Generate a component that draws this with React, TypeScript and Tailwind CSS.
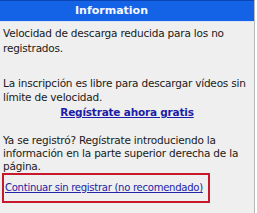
export default function App() {
  return (
    <div className="w-[257px] h-[213px] bg-white overflow-hidden">
      <div
        className="w-[255px] h-[213px] bg-[#efefef] border-r border-[#b8b8b8] text-[10.5px] leading-[14px] text-[#1a1a1a] tracking-[-0.2px]"
        style={{ fontFamily: '"DejaVu Sans", sans-serif' }}
      >
        <div className="h-[22px] bg-[#1463e6] border-t border-[#0b45b5] border-b border-b-[#d8e4f4] pl-[75px] flex items-center">
          <span className="text-[#f4f8ff] font-bold text-[11px] tracking-[0px]">Information</span>
        </div>
        <div className="px-[3px] pt-[4px]">
          <p className="leading-[15px]">Velocidad de descarga reducida para los no registrados.</p>
          <p className="mt-[20px]">
            La inscripción es libre para descargar vídeos sin límite de velocidad.
          </p>
          <p className="text-center mt-[1px]">
            <a href="#" className="font-bold text-[#1c1ca8] underline">
              Regístrate ahora gratis
            </a>
          </p>
          <p className="mt-[15px] leading-[13px]">
            Ya se registró? Regístrate introduciendo la información en la parte superior derecha de la página.
          </p>
        </div>
        <div className="ml-[2px] w-[208px] h-[30px] border-2 border-[#c8182c] flex items-center px-[1px]">
          <a href="#" className="text-[#2323a8] underline whitespace-nowrap text-[10.1px] tracking-[-0.3px]">
            Continuar sin registrar (no recomendado)
          </a>
        </div>
      </div>
    </div>
  );
}
